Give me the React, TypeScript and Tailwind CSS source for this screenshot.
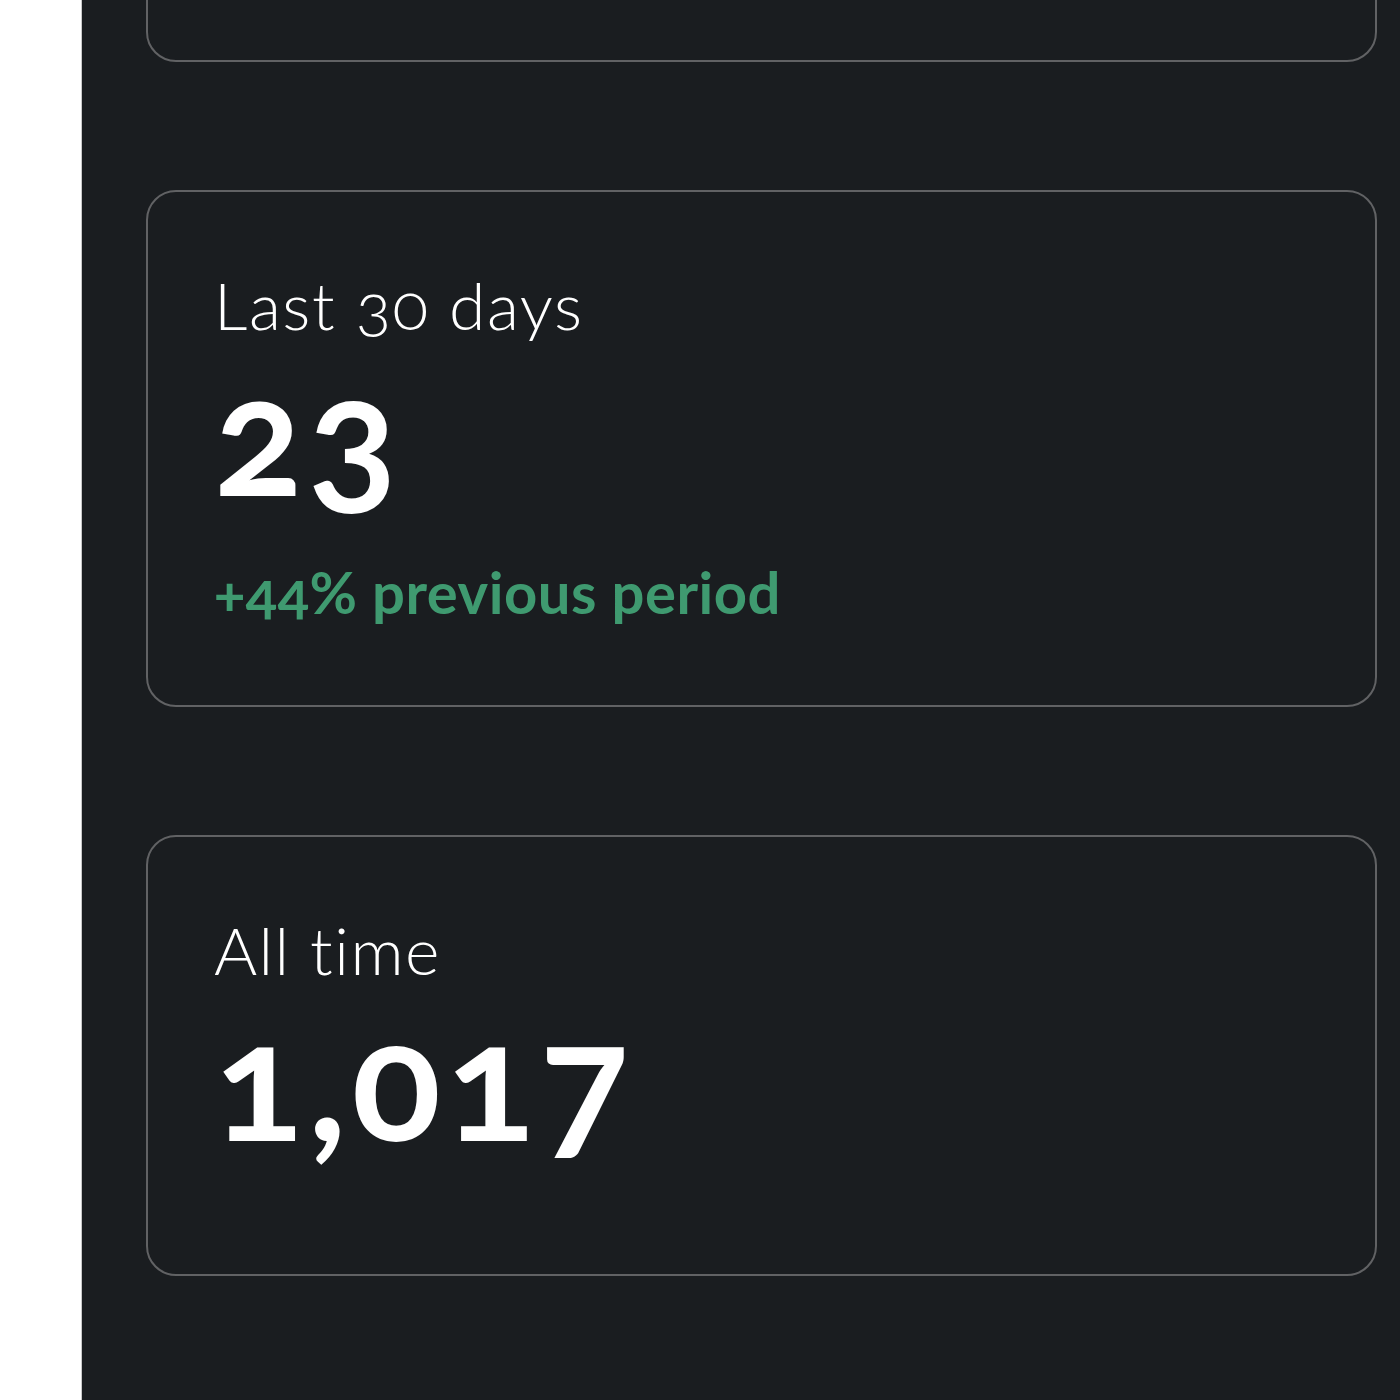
import React from "react";

const font = { fontFamily: "Lato, 'Open Sans', sans-serif" };

function Card({ label, value, delta, cls }: { label: string; value: string; delta?: string; cls: string }) {
  return (
    <div className={`rounded-[30px] border-2 border-[#616264] bg-[#1a1d20] px-[66px] pt-[80px] ${cls}`}>
      <div className="text-[66px] font-light leading-none tracking-[1.5px] text-white oldstyle-nums">{label}</div>
      <div className="mt-[12px] text-[165px] font-bold leading-none tracking-[5px] text-white oldstyle-nums">{value}</div>
      {delta && (
        <div className="mt-[48px] text-[58px] font-bold leading-none tracking-[0.5px] text-[#3f9a70] oldstyle-nums">{delta}</div>
      )}
    </div>
  );
}

export default function App() {
  return (
    <div className="flex h-[1400px] w-[1400px] overflow-hidden bg-white" style={font}>
      <div className="w-[82px] shrink-0 border-r border-[#c8c8c8] bg-white" />
      <div className="flex flex-1 flex-col gap-[128px] bg-[#1a1d20] pl-[64px] pr-[23px]">
        <div className="-mt-[400px] h-[462px] shrink-0 rounded-[30px] border-2 border-[#616264]" />
        <Card cls="h-[517px] shrink-0" label="Last 30 days" value="23" delta="+44% previous period" />
        <Card cls="h-[441px] shrink-0" label="All time" value="1,017" />
      </div>
    </div>
  );
}
